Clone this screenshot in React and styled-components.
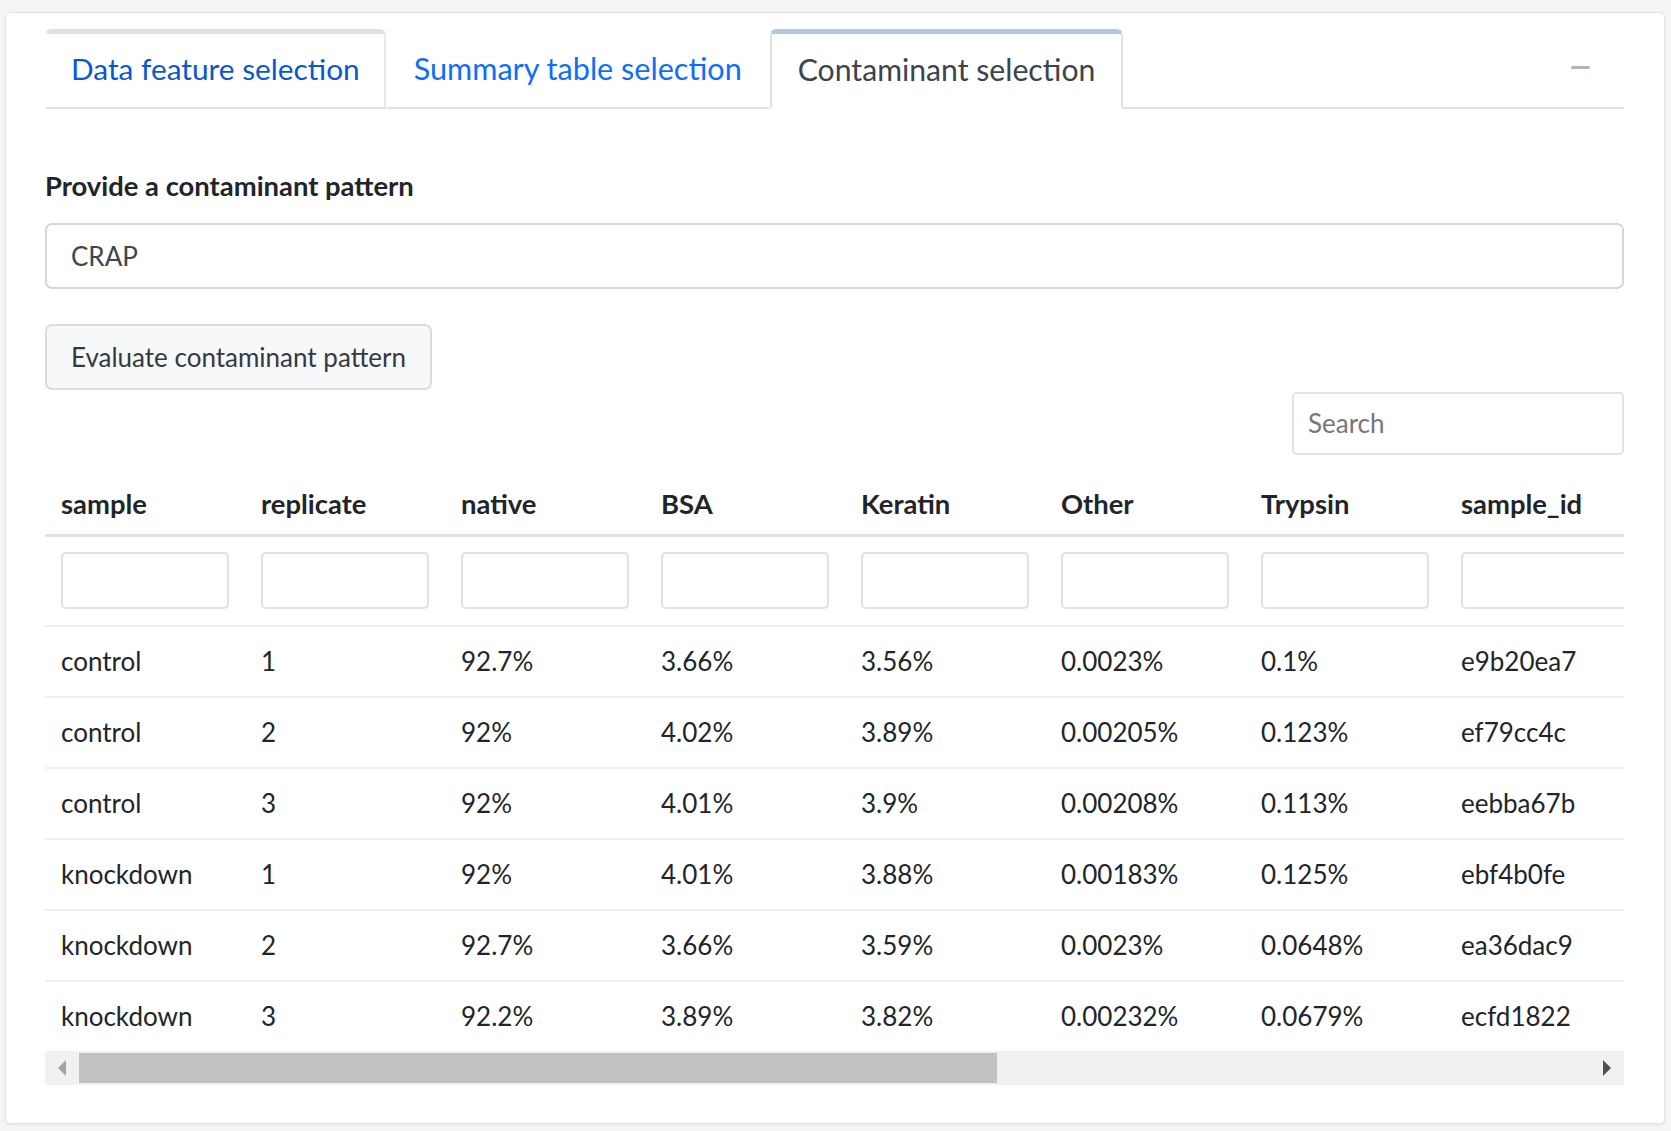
import React from 'react';
import styled, { createGlobalStyle } from 'styled-components';

const GlobalStyle = createGlobalStyle`
  html, body {
    margin: 0;
    padding: 0;
    background: #f6f5f3;
    font-family: Lato, "Liberation Sans", sans-serif;
    color: #212529;
  }
`;

const Page = styled.div`
  padding: 12px 6px 7px 5px;
`;

const Card = styled.div`
  background: #fff;
  border: 1px solid #e4e4e4;
  border-radius: 5px;
  box-shadow: 0 1px 3px rgba(0, 0, 0, 0.08);
  padding: 16px 40px 38px 39px;
`;

const Nav = styled.div`
  display: flex;
  align-items: flex-end;
  border-bottom: 2px solid #dee2e6;
`;

const Tab = styled.div`
  box-sizing: border-box;
  height: 80px;
  margin-bottom: -2px;
  padding: 11px ${({ $pad }) => $pad || 24}px 0;
  font-size: ${({ $size }) => $size || 30}px;
  line-height: 48px;
  white-space: nowrap;
  border-top-left-radius: 6px;
  border-top-right-radius: 6px;
  border-top: 5px solid ${({ $top }) => $top || 'transparent'};
  border-left: 2px solid ${({ $left }) => $left || 'transparent'};
  border-right: 2px solid ${({ $right }) => $right || 'transparent'};
  border-bottom: 2px solid ${({ $active }) => ($active ? '#fff' : '#dee2e6')};
  color: ${({ $color }) => $color};
  background: #fff;
`;

const Collapse = styled.span`
  margin: 0 34px 38px auto;
  width: 19px;
  height: 3px;
  border-radius: 2px;
  background: #adb5bd;
`;

const Content = styled.div`
  padding-top: 58px;
`;

const Label = styled.div`
  font-size: 27.4px;
  font-weight: 700;
  line-height: 38px;
  margin-bottom: 18px;
`;

const TextInput = styled.div`
  box-sizing: border-box;
  height: 66px;
  padding: 0 24px;
  border: 2px solid #d3d6da;
  border-radius: 7px;
  font-size: 26px;
  line-height: 62px;
  color: #3f464d;
`;

const Button = styled.div`
  box-sizing: border-box;
  display: inline-block;
  margin-top: 35px;
  height: 66px;
  padding: 0 24px;
  border: 2px solid #dadde0;
  border-radius: 7px;
  background: #f7f8f9;
  font-size: 26px;
  line-height: 62px;
  color: #343a40;
`;

const SearchRow = styled.div`
  display: flex;
  justify-content: flex-end;
  margin-top: 2px;
`;

const Search = styled.div`
  box-sizing: border-box;
  width: 332px;
  height: 63px;
  padding: 0 14px;
  border: 2px solid #e3e3e3;
  border-radius: 5px;
  font-size: 26px;
  line-height: 59px;
  color: #777;
`;

const TableScroll = styled.div`
  margin-top: 10px;
  overflow: hidden;
`;

const Table = styled.table`
  border-collapse: collapse;
  table-layout: fixed;
  width: 1600px;
  font-size: 26px;
`;

const Th = styled.th`
  width: 200px;
  box-sizing: border-box;
  height: 70px;
  padding: 8px 16px 0;
  text-align: left;
  font-size: 27.4px;
  font-weight: 700;
  border-bottom: 3px solid #e2e2e2;
`;

const FilterCell = styled.td`
  height: 88px;
  padding: 0 16px;
  border-bottom: 2px solid #efefef;
`;

const FilterBox = styled.div`
  box-sizing: border-box;
  height: 57px;
  border: 2px solid #e2e2e2;
  border-radius: 5px;
`;

const Td = styled.td`
  height: 69px;
  padding: 0 16px;
  white-space: nowrap;
  border-bottom: ${({ $last }) => ($last ? 'none' : '2px solid #efefef')};
`;

const ScrollBar = styled.div`
  display: flex;
  align-items: center;
  height: 34px;
  background: #f1f1f1;
`;

const Arrow = styled.div`
  width: 34px;
  display: flex;
  justify-content: center;
`;

const Track = styled.div`
  flex: 1;
  height: 30px;
  display: flex;
`;

const Thumb = styled.div`
  height: 30px;
  background: #c1c1c1;
`;

const columns = ['sample', 'replicate', 'native', 'BSA', 'Keratin', 'Other', 'Trypsin', 'sample_id'];

const rows = [
  ['control', '1', '92.7%', '3.66%', '3.56%', '0.0023%', '0.1%', 'e9b20ea7'],
  ['control', '2', '92%', '4.02%', '3.89%', '0.00205%', '0.123%', 'ef79cc4c'],
  ['control', '3', '92%', '4.01%', '3.9%', '0.00208%', '0.113%', 'eebba67b'],
  ['knockdown', '1', '92%', '4.01%', '3.88%', '0.00183%', '0.125%', 'ebf4b0fe'],
  ['knockdown', '2', '92.7%', '3.66%', '3.59%', '0.0023%', '0.0648%', 'ea36dac9'],
  ['knockdown', '3', '92.2%', '3.89%', '3.82%', '0.00232%', '0.0679%', 'ecfd1822'],
];

const Caret = ({ dir, color }) => (
  <svg width="8" height="16" viewBox="0 0 8 16">
    {dir === 'left' ? (
      <polygon points="8,0 0,8 8,16" fill={color} />
    ) : (
      <polygon points="0,0 8,8 0,16" fill={color} />
    )}
  </svg>
);

const App = () => {
  return (
    <Page>
      <GlobalStyle />
      <Card>
        <Nav>
          <Tab $size={29.8} $top="#dee2e6" $right="#e6e9ec" $color="#0a58ca">Data feature selection</Tab>
          <Tab $size={30.6} $pad={26} $color="#0d6efd">Summary table selection</Tab>
          <Tab $size={30.2} $pad={26} $active $top="#b3c8e0" $left="#dee2e6" $right="#dee2e6" $color="#3b434b">
            Contaminant selection
          </Tab>
          <Collapse />
        </Nav>
        <Content>
          <Label>Provide a contaminant pattern</Label>
          <TextInput>CRAP</TextInput>
          <Button>Evaluate contaminant pattern</Button>
          <SearchRow>
            <Search>Search</Search>
          </SearchRow>
          <TableScroll>
            <Table>
              <thead>
                <tr>
                  {columns.map((c) => (
                    <Th key={c}>{c}</Th>
                  ))}
                </tr>
              </thead>
              <tbody>
                <tr>
                  {columns.map((c) => (
                    <FilterCell key={c}>
                      <FilterBox />
                    </FilterCell>
                  ))}
                </tr>
                {rows.map((r, i) => (
                  <tr key={i}>
                    {r.map((v, j) => (
                      <Td key={j} $last={i === rows.length - 1}>{v}</Td>
                    ))}
                  </tr>
                ))}
              </tbody>
            </Table>
          </TableScroll>
          <ScrollBar>
            <Arrow>
              <Caret dir="left" color="#a3a3a3" />
            </Arrow>
            <Track>
              <Thumb style={{ width: `${(918 / 1511) * 100}%` }} />
            </Track>
            <Arrow>
              <Caret dir="right" color="#505050" />
            </Arrow>
          </ScrollBar>
        </Content>
      </Card>
    </Page>
  );
};

export default App;
